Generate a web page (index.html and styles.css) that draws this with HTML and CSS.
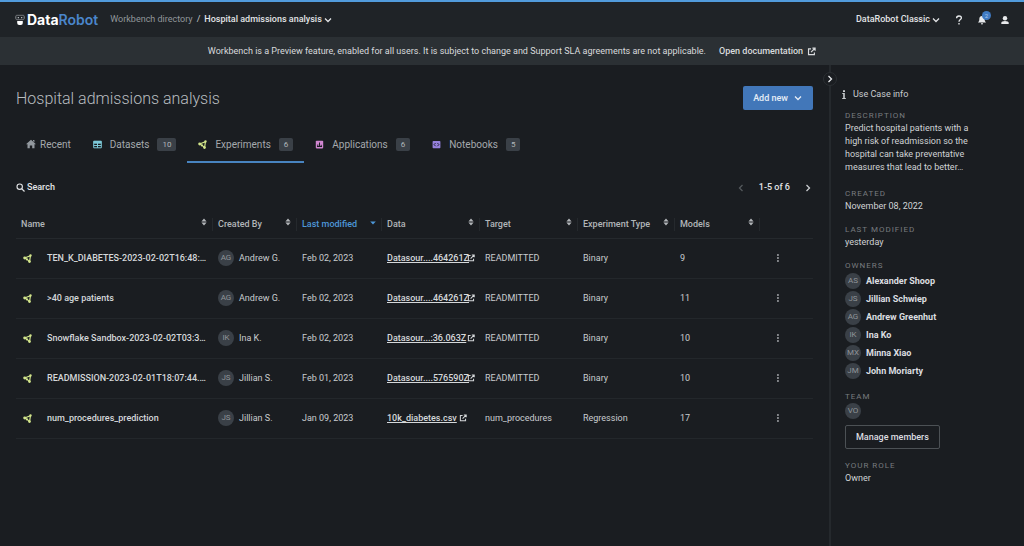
FILE: index.html
```html
<!DOCTYPE html>
<html lang="en">
<head>
    <meta charset="UTF-8">
    <meta name="viewport" content="width=device-width, initial-scale=1.0">
    <title>Hospital admissions analysis - DataRobot Workbench</title>
    <link rel="stylesheet" href="styles.css">
</head>
<body>
<svg class="sprite" aria-hidden="true">
    <symbol id="chevron" viewBox="0 0 10 10"><path d="M2 3.500 5 6.500l3-3" fill="none" stroke="currentColor" stroke-width="1.300"/></symbol>
    <symbol id="external" viewBox="0 0 10 10"><path d="M4.500 2H1.700v6.500h6.500V6M6 1.200h3v3M8.800 1.400 4.500 5.700" fill="none" stroke="currentColor" stroke-width="1.300"/></symbol>
    <symbol id="experiment" viewBox="0 0 10 10">
        <path d="M1.800 4.400 8.300 1.800 7.300 8.400 4.600 6z" fill="none" stroke="currentColor" stroke-width="1.300"/>
        <circle cx="1.900" cy="4.500" r="1.600" fill="currentColor"/>
        <circle cx="8.300" cy="1.700" r="1.300" fill="currentColor"/>
        <circle cx="7.200" cy="8.400" r="1.500" fill="currentColor"/>
        <circle cx="4.400" cy="6" r="1.200" fill="currentColor"/>
    </symbol>
    <symbol id="sort" viewBox="0 0 6 8"><path d="M.4 3.400 3 .4l2.600 3zM.4 4.600 3 7.600l2.600-3z" fill="currentColor"/></symbol>
    <symbol id="dots" viewBox="0 0 4 10"><path d="M1.200 1.200h1.500v1.500H1.200zM1.200 4.200h1.500v1.500H1.200zM1.200 7.200h1.500v1.500H1.200z" fill="currentColor"/></symbol>
</svg>

<header class="topbar">
    <a class="logo" href="#">
        <svg class="logo-robot" viewBox="0 0 10 12" aria-hidden="true">
            <path d="M1.700 1.300h6.600q.8 0 .8.800v2.600q0 1-1 1H1.900q-1 0-1-1V2.100q0-.8.800-.8z" fill="none" stroke="#85898d" stroke-width=".8"/>
            <path d="M.3 2.500v2M9.700 2.500v2" stroke="#85898d" stroke-width=".6"/>
            <path d="M2.700 3h1.300v1.200H2.700zM6 3h1.300v1.200H6z" fill="#b8bcc0"/>
            <path d="M2.200 7h5.600v2q0 2-2 2H4.200q-2 0-2-2z" fill="#fff"/>
        </svg>
        <span class="logo-text">Data<span class="logo-blue">Robot</span></span>
    </a>
    <nav class="breadcrumb">
        <a href="#">Workbench directory</a>
        <span>/</span>
        <button class="plain strong">Hospital admissions analysis <svg class="icon"><use href="#chevron"/></svg></button>
    </nav>
    <div class="top-actions">
        <button class="plain strong">DataRobot Classic <svg class="icon"><use href="#chevron"/></svg></button>
        <button class="plain" aria-label="Help">
            <svg class="icon" viewBox="0 0 10 10"><path d="M2.600 3.200C2.600 1.800 3.600 1 5 1s2.400.8 2.400 2.100C7.400 4.600 5 4.700 5 6.800M5 8v1.500" fill="none" stroke="currentColor" stroke-width="1.300"/></svg>
        </button>
        <button class="plain bell" aria-label="Notifications">
            <svg class="icon" viewBox="0 0 10 10"><path d="M5 1C3 1 2.300 2.500 2.300 4.500 2.300 6 1.800 6.500 1 7.600h8C8.200 6.500 7.700 6 7.700 4.500 7.700 2.500 7 1 5 1zM3.900 8.200h2.200Q6 9.500 5 9.500T3.900 8.200z" fill="currentColor"/></svg>
            <span class="notice">2</span>
        </button>
        <button class="plain" aria-label="Account">
            <svg class="icon" viewBox="0 0 10 10"><circle cx="5" cy="3.300" r="2.200" fill="currentColor"/><path d="M1.300 9V7.800Q1.500 6 5 6t3.700 1.800V9z" fill="currentColor"/></svg>
        </button>
    </div>
</header>

<div class="banner">
    <span>Workbench is a Preview feature, enabled for all users. It is subject to change and Support SLA agreements are not applicable.</span>
    <a href="#">Open documentation <svg class="icon-small"><use href="#external"/></svg></a>
</div>

<div class="page">
    <main class="content">
        <div class="title-row">
            <h1>Hospital admissions analysis</h1>
            <button class="add-new">Add new <svg class="icon"><use href="#chevron"/></svg></button>
        </div>

        <nav class="tabs">
            <a class="tab tab-recent" href="#">
                <svg class="icon" viewBox="0 0 10 10"><path d="M5 .8 10 5.300H8.500v3.900h-2.300V6.400H3.800v2.800H1.500V5.300H0zM7 1h1.400v2.200L7 2z" fill="#92989e"/></svg>
                Recent
            </a>
            <a class="tab" href="#">
                <svg class="icon-small" viewBox="0 0 9 9"><path d="M.7 1.200h7.600v6.600H.7zM.7 3.200h7.600M.7 5.500h7.600M4.500 3v4.800" fill="none" stroke="#7cc8d8" stroke-width="1"/><path d="M.7 1h7.600v2H.7z" fill="#7cc8d8"/></svg>
                Datasets <span class="count">10</span>
            </a>
            <a class="tab active" href="#" aria-current="page">
                <svg class="icon-small experiment"><use href="#experiment"/></svg>
                Experiments <span class="count">6</span>
            </a>
            <a class="tab" href="#">
                <svg class="icon-small" viewBox="0 0 9 9"><rect x=".8" y=".8" width="7.400" height="7.600" rx=".8" fill="#cf86cf"/><path d="M2 6.500h5M2.800 6.300V4.500M4.500 6.300V2.500M6.200 6.300V4.800" stroke="#1b1e22" stroke-width="1"/></svg>
                Applications <span class="count">6</span>
            </a>
            <a class="tab" href="#">
                <svg class="icon-small" viewBox="0 0 9 9"><rect x=".6" y="1" width="7.800" height="7.200" rx=".8" fill="#9580dc"/><path d="M3.600 3 2.100 4.600l1.500 1.600M5.400 3l1.500 1.600-1.500 1.600" fill="none" stroke="#1b1e22" stroke-width=".9"/></svg>
                Notebooks <span class="count">5</span>
            </a>
        </nav>

        <div class="toolbar">
            <button class="plain strong search">
                <svg class="icon-small" viewBox="0 0 9 9"><circle cx="3.700" cy="3.700" r="2.700" fill="none" stroke="currentColor" stroke-width="1.100"/><path d="m5.600 5.600 2.900 2.900" stroke="currentColor" stroke-width="1.200"/></svg>
                Search
            </button>
            <div class="pager">
                <button class="plain" aria-label="Previous page" disabled><svg class="icon prev"><use href="#chevron"/></svg></button>
                <span class="strong">1-5 of 6</span>
                <button class="plain" aria-label="Next page"><svg class="icon next"><use href="#chevron"/></svg></button>
            </div>
        </div>

        <table class="experiments">
            <colgroup>
                <col>
                <col class="col-created">
                <col class="col-modified">
                <col class="col-data">
                <col class="col-target">
                <col class="col-type">
                <col class="col-models">
                <col class="col-menu">
            </colgroup>
            <thead>
                <tr>
                    <th><button class="sort">Name <svg><use href="#sort"/></svg></button></th>
                    <th><button class="sort">Created By <svg><use href="#sort"/></svg></button></th>
                    <th aria-sort="descending"><button class="sort sorted">Last modified <svg viewBox="0 0 6 8"><path d="M.2 3.500h5.600L3 6.600z" fill="currentColor"/></svg></button></th>
                    <th><button class="sort">Data <svg><use href="#sort"/></svg></button></th>
                    <th><button class="sort">Target <svg><use href="#sort"/></svg></button></th>
                    <th><button class="sort">Experiment Type <svg><use href="#sort"/></svg></button></th>
                    <th><button class="sort">Models <svg><use href="#sort"/></svg></button></th>
                    <th></th>
                </tr>
            </thead>
            <tbody>
                <tr>
                    <td><div class="name"><svg class="icon-small experiment"><use href="#experiment"/></svg><span>TEN_K_DIABETES-2023-02-02T16:48:…</span></div></td>
                    <td><div class="user"><span class="avatar">AG</span>Andrew G.</div></td>
                    <td>Feb 02, 2023</td>
                    <td><a class="data" href="#"><span>Datasour....464261Z</span><svg class="icon-tiny"><use href="#external"/></svg></a></td>
                    <td>READMITTED</td>
                    <td>Binary</td>
                    <td>9</td>
                    <td><button class="plain menu" aria-label="Actions"><svg><use href="#dots"/></svg></button></td>
                </tr>
                <tr>
                    <td><div class="name"><svg class="icon-small experiment"><use href="#experiment"/></svg><span>&gt;40 age patients</span></div></td>
                    <td><div class="user"><span class="avatar">AG</span>Andrew G.</div></td>
                    <td>Feb 02, 2023</td>
                    <td><a class="data" href="#"><span>Datasour....464261Z</span><svg class="icon-tiny"><use href="#external"/></svg></a></td>
                    <td>READMITTED</td>
                    <td>Binary</td>
                    <td>11</td>
                    <td><button class="plain menu" aria-label="Actions"><svg><use href="#dots"/></svg></button></td>
                </tr>
                <tr>
                    <td><div class="name"><svg class="icon-small experiment"><use href="#experiment"/></svg><span>Snowflake Sandbox-2023-02-02T03:3…</span></div></td>
                    <td><div class="user"><span class="avatar">IK</span>Ina K.</div></td>
                    <td>Feb 02, 2023</td>
                    <td><a class="data" href="#"><span>Datasour...:36.063Z</span><svg class="icon-tiny"><use href="#external"/></svg></a></td>
                    <td>READMITTED</td>
                    <td>Binary</td>
                    <td>10</td>
                    <td><button class="plain menu" aria-label="Actions"><svg><use href="#dots"/></svg></button></td>
                </tr>
                <tr>
                    <td><div class="name"><svg class="icon-small experiment"><use href="#experiment"/></svg><span>READMISSION-2023-02-01T18:07:44.…</span></div></td>
                    <td><div class="user"><span class="avatar">JS</span>Jillian S.</div></td>
                    <td>Feb 01, 2023</td>
                    <td><a class="data" href="#"><span>Datasour....576590Z</span><svg class="icon-tiny"><use href="#external"/></svg></a></td>
                    <td>READMITTED</td>
                    <td>Binary</td>
                    <td>10</td>
                    <td><button class="plain menu" aria-label="Actions"><svg><use href="#dots"/></svg></button></td>
                </tr>
                <tr>
                    <td><div class="name"><svg class="icon-small experiment"><use href="#experiment"/></svg><span>num_procedures_prediction</span></div></td>
                    <td><div class="user"><span class="avatar">JS</span>Jillian S.</div></td>
                    <td>Jan 09, 2023</td>
                    <td><a class="data" href="#"><span>10k_diabetes.csv</span><svg class="icon-tiny"><use href="#external"/></svg></a></td>
                    <td>num_procedures</td>
                    <td>Regression</td>
                    <td>17</td>
                    <td><button class="plain menu" aria-label="Actions"><svg><use href="#dots"/></svg></button></td>
                </tr>
            </tbody>
        </table>
    </main>

    <aside class="info">
        <button class="collapse" aria-label="Collapse panel"><svg class="icon next"><use href="#chevron"/></svg></button>
        <h2>
            <svg viewBox="0 0 4 9"><path d="M1 .3h2v1.700H1zM.3 3h2.500v5h1v1H.2V8h1V4H.3z" fill="currentColor"/></svg>
            Use Case info
        </h2>
        <section>
            <h3>Description</h3>
            <p class="description">Predict hospital patients with a high risk of readmission so the hospital can take preventative measures that lead to better…</p>
        </section>
        <section>
            <h3>Created</h3>
            <p>November 08, 2022</p>
        </section>
        <section>
            <h3>Last modified</h3>
            <p>yesterday</p>
        </section>
        <section>
            <h3>Owners</h3>
            <ul class="owners">
                <li><span class="avatar">AS</span>Alexander Shoop</li>
                <li><span class="avatar">JS</span>Jillian Schwiep</li>
                <li><span class="avatar">AG</span>Andrew Greenhut</li>
                <li><span class="avatar">IK</span>Ina Ko</li>
                <li><span class="avatar">MX</span>Minna Xiao</li>
                <li><span class="avatar">JM</span>John Moriarty</li>
            </ul>
        </section>
        <section class="team">
            <h3>Team</h3>
            <span class="avatar">VO</span>
            <button class="manage">Manage members</button>
        </section>
        <section>
            <h3>Your role</h3>
            <p>Owner</p>
        </section>
    </aside>
</div>
</body>
</html>
```
FILE: styles.css
```css
* {
    box-sizing: border-box;
}

body {
    display: flex;
    flex-direction: column;
    min-height: 100vh;
    margin: 0;
    background-color: #1a1d21;
    color: #c9cccf;
    font-family: Roboto, "Liberation Sans", sans-serif;
    font-size: 9px;
    line-height: 13px;
}

h1, h2, h3, p, ul {
    margin: 0;
    padding: 0;
    font-weight: 400;
}

a {
    color: inherit;
    text-decoration: none;
}

button {
    font: inherit;
    color: inherit;
    cursor: pointer;
}

svg {
    flex: none;
}

.sprite {
    position: absolute;
    width: 0;
    height: 0;
}

.icon {
    width: 10px;
    height: 10px;
}

.icon-small {
    width: 9px;
    height: 9px;
}

.icon-tiny {
    width: 8px;
    height: 8px;
}

.next {
    transform: rotate(-90deg);
}

.prev {
    transform: rotate(90deg);
}

.experiment {
    color: #d2e58b;
}

.plain {
    display: flex;
    align-items: center;
    gap: 1px;
    padding: 0;
    border: none;
    background: none;
}

.plain:disabled {
    color: #55595d;
    cursor: default;
}

.strong {
    font-weight: 500;
    color: #e2e4e6;
}

/* Top bar */
.topbar {
    display: flex;
    align-items: center;
    height: 37px;
    padding: 0 14px 0 15px;
    border-top: 2px solid #519bdc;
    background-color: #1f2327;
}

.logo {
    display: flex;
    align-items: center;
    gap: 2px;
}

.logo-robot {
    width: 10px;
    height: 12px;
}

.logo-text {
    color: #fff;
    font-family: Inter, sans-serif;
    font-size: 14px;
    font-weight: 700;
}

.logo-blue {
    color: #4a86cb;
    font-weight: 600;
}

.breadcrumb {
    display: flex;
    gap: 4px;
    margin-left: 12px;
}

.breadcrumb a {
    color: #92979b;
}

.top-actions {
    display: flex;
    align-items: center;
    gap: 13px;
    margin-left: auto;
    color: #e8eaec;
}

.bell {
    position: relative;
}

.notice {
    position: absolute;
    top: -4px;
    right: -4px;
    width: 9px;
    border-radius: 50%;
    background-color: #3f7ac2;
    color: #a9c8ec;
    font-size: 6px;
    line-height: 9px;
}

.banner {
    display: flex;
    justify-content: center;
    align-items: center;
    gap: 13px;
    height: 28px;
    background-color: #2b3034;
    color: #d9dbdd;
}

.banner a {
    display: flex;
    align-items: center;
    gap: 4px;
    font-weight: 500;
}

/* Page */
.page {
    display: flex;
    flex: 1;
}

.content {
    flex: 1;
    min-width: 0;
    padding: 20px 16px;
}

.title-row {
    display: flex;
    justify-content: space-between;
    align-items: center;
}

h1 {
    padding-top: 2px;
    color: #b9bdc0;
    font-size: 16px;
    font-weight: 300;
    line-height: 24px;
}

.add-new {
    display: flex;
    align-items: center;
    gap: 5px;
    height: 24px;
    padding: 0 10px;
    border: none;
    border-radius: 2px;
    background-color: #4277b9;
    color: #e6edf6;
    font-weight: 500;
}

.tabs {
    display: flex;
    margin-top: 16px;
}

.tab {
    display: flex;
    align-items: center;
    gap: 8px;
    height: 36px;
    padding: 0 11px;
    border-bottom: 2px solid transparent;
    color: #a5a9ad;
    font-size: 10px;
}

.tab-recent {
    gap: 4px;
    padding-left: 10px;
}

.active {
    border-bottom-color: #4884c0;
}

.count {
    padding: 0 5px;
    border-radius: 2px;
    background-color: #3a4047;
    color: #b2b6ba;
    font-size: 8px;
}

.toolbar {
    display: flex;
    justify-content: space-between;
    align-items: center;
    height: 49px;
}

.search {
    gap: 2px;
}

.pager {
    display: flex;
    align-items: center;
    gap: 13px;
}

/* Experiments table */
.experiments {
    width: 100%;
    border-collapse: collapse;
    table-layout: fixed;
}

.col-created {
    width: 84px;
}

.col-modified,
.col-models {
    width: 85px;
}

.col-data,
.col-target {
    width: 98px;
}

.col-type {
    width: 97px;
}

.col-menu {
    width: 53px;
}

.experiments th {
    height: 26px;
    padding: 0;
    border-bottom: 1px solid #25292d;
    text-align: left;
}

.sort {
    display: flex;
    justify-content: space-between;
    width: 100%;
    padding: 0 5px;
    border: none;
    border-right: 1px solid #25292d;
    background: none;
    color: #b2b6b9;
    font-weight: 500;
}

.sort svg {
    width: 6px;
    height: 8px;
}

.sorted {
    color: #4d97d8;
}

.experiments td {
    height: 40px;
    padding: 0 5px;
    border-bottom: 1px solid #23272b;
    white-space: nowrap;
}

.name {
    display: flex;
    align-items: center;
    gap: 15px;
    padding-left: 2px;
    color: #d5d8da;
    font-weight: 500;
}

.user {
    display: flex;
    align-items: center;
    gap: 5px;
}

.avatar {
    flex: none;
    width: 16px;
    border-radius: 50%;
    background-color: #3a4047;
    color: #90959a;
    font-size: 8px;
    font-weight: 400;
    line-height: 16px;
    text-align: center;
}

.data {
    display: flex;
    align-items: center;
    gap: 2px;
    color: #d5d8da;
    font-weight: 500;
}

.data span {
    min-width: 0;
    text-decoration: underline;
}

.menu svg {
    width: 4px;
    height: 10px;
}

.menu {
    margin-left: 11px;
}

/* Info panel */
.info {
    position: relative;
    width: 195px;
    padding: 23px 48px 16px 14px;
    border-left: 2px solid #25292d;
}

.collapse {
    position: absolute;
    top: 7px;
    left: -8px;
    display: flex;
    justify-content: center;
    align-items: center;
    width: 14px;
    height: 14px;
    padding: 0;
    border: 1px solid #2b2f33;
    border-radius: 50%;
    background-color: #1a1d21;
    color: #e8eaec;
}

h2 {
    display: flex;
    align-items: center;
    gap: 7px;
    margin-left: -3px;
    font-size: 9px;
    line-height: 13px;
}

h2 svg {
    width: 4px;
    height: 9px;
}

h3 {
    color: #777b7f;
    font-size: 8px;
    letter-spacing: 1px;
    line-height: 13px;
    text-transform: uppercase;
}

.info section {
    margin-top: 8px;
}

.info section + section {
    margin-top: 10px;
}

.info p {
    color: #d0d3d5;
}

.info .description {
    margin-bottom: 13px;
}

.owners {
    list-style: none;
}

.owners li {
    display: flex;
    align-items: center;
    gap: 5px;
    height: 18px;
    color: #dcdee0;
    font-weight: 700;
}

.team .avatar {
    display: block;
}

.manage {
    height: 24px;
    margin-top: 6px;
    padding: 0 10px;
    border: 1px solid #4c5155;
    border-radius: 2px;
    background: none;
    color: #dcdee0;
    font-weight: 500;
}
```
